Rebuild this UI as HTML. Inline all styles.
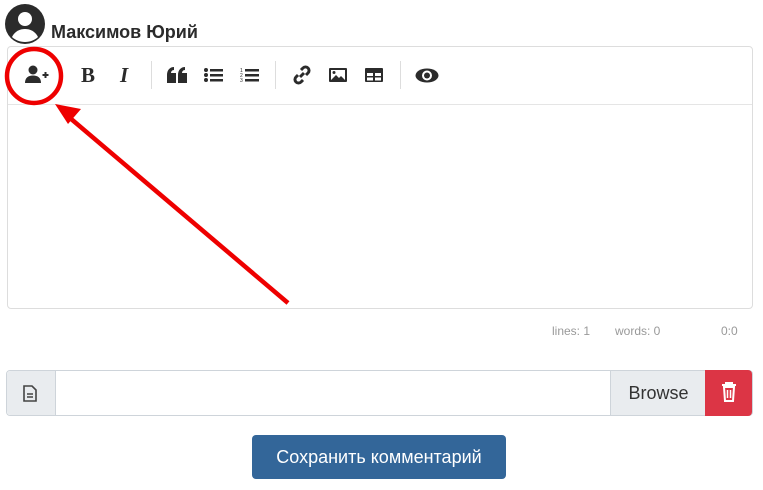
<!DOCTYPE html>
<html><head><meta charset="utf-8"><style>
body{margin:0;width:763px;height:490px;background:#fff;font-family:"Liberation Sans",sans-serif;position:relative;overflow:hidden}
.abs{position:absolute}
.ic{position:absolute;top:66px;color:#2b2b2b}
.sep{position:absolute;top:61px;width:1px;height:28px;background:#ddd}
</style></head><body>
<svg class="abs" style="left:5px;top:4px" width="40" height="40" viewBox="0 0 40 40"><circle cx="20" cy="20" r="20" fill="#2b2b2b"/><circle cx="20" cy="15" r="7" fill="#fff"/><path d="M7 33c3-6 8-8 13-8s10 2 13 8c-3 3-8 5-13 5s-10-2-13-5z" fill="#fff"/></svg>
<div class="abs" style="left:51px;top:22px;font-size:18px;font-weight:bold;color:#2b2b2b">Максимов Юрий</div>
<div class="abs" style="left:7px;top:46px;width:744px;height:261px;border:1px solid #ddd;border-radius:4px"></div>
<div class="abs" style="left:8px;top:104px;width:744px;height:1px;background:#e5e5e5"></div>
<svg class="ic" style="left:24px;top:65px" width="26" height="20" viewBox="0 0 26 20"><circle cx="9" cy="5" r="4.5" fill="#2b2b2b"/><path d="M1 18c0-5 3-7.5 8-7.5s8 2.5 8 7.5z" fill="#2b2b2b"/><path d="M18.5 10h6M21.5 7v6" stroke="#2b2b2b" stroke-width="2"/></svg>
<div class="ic" style="left:81px;top:63px;font:bold 21px 'Liberation Serif',serif">B</div>
<div class="ic" style="left:120px;top:63px;font:italic bold 21px 'Liberation Serif',serif">I</div>
<div class="sep" style="left:151px"></div>
<svg class="ic" style="left:167px;top:67px" width="21" height="16" viewBox="0 0 21 16"><path d="M0 8c0-5 3-8 7-8v3c-2 0-3 1.5-3 3h5v10H0zM11 8c0-5 3-8 7-8v3c-2 0-3 1.5-3 3h5v10h-9z" fill="#2b2b2b"/></svg>
<svg class="ic" style="left:204px;top:68px" width="20" height="14"><g fill="#2b2b2b"><circle cx="2" cy="2" r="2"/><circle cx="2" cy="7" r="2"/><circle cx="2" cy="12" r="2"/><rect x="6" y="1" width="13" height="2.5"/><rect x="6" y="6" width="13" height="2.5"/><rect x="6" y="11" width="13" height="2.5"/></g></svg>
<svg class="ic" style="left:240px;top:67px" width="20" height="16"><g fill="#2b2b2b"><text x="0" y="5" font-size="5">1</text><text x="0" y="10" font-size="5">2</text><text x="0" y="15" font-size="5">3</text><rect x="5" y="2" width="14" height="2.5"/><rect x="5" y="7" width="14" height="2.5"/><rect x="5" y="12" width="14" height="2.5"/></g></svg>
<div class="sep" style="left:275px"></div>
<svg class="ic" style="left:292px;top:65px" width="20" height="20" viewBox="0 0 20 20"><path d="M8 12l4-4M9 5l2-2a3.5 3.5 0 015 5l-2 2M11 15l-2 2a3.5 3.5 0 01-5-5l2-2" stroke="#2b2b2b" stroke-width="3" fill="none"/></svg>
<svg class="ic" style="left:328px;top:67px" width="20" height="16"><rect x="1" y="1" width="18" height="14" rx="1" fill="#2b2b2b"/><rect x="3" y="3" width="14" height="10" fill="#fff"/><path d="M3 13l5-5 3 3 2-2 4 4z" fill="#2b2b2b"/><circle cx="6" cy="5.5" r="1.5" fill="#2b2b2b"/></svg>
<svg class="ic" style="left:364px;top:67px" width="20" height="16"><rect x="1" y="1" width="18" height="14" rx="1" fill="#2b2b2b"/><rect x="3" y="6" width="6" height="3" fill="#fff"/><rect x="11" y="6" width="6" height="3" fill="#fff"/><rect x="3" y="10.5" width="6" height="3" fill="#fff"/><rect x="11" y="10.5" width="6" height="3" fill="#fff"/></svg>
<div class="sep" style="left:400px"></div>
<svg class="ic" style="left:415px;top:68px" width="24" height="15"><ellipse cx="12" cy="7.5" rx="11.5" ry="7" fill="#2b2b2b"/><circle cx="12" cy="7.5" r="5" fill="#fff"/><circle cx="12" cy="7.5" r="3" fill="#2b2b2b"/></svg>
<svg class="abs" style="left:0;top:0" width="763" height="320"><circle cx="34" cy="76" r="27" fill="none" stroke="#ee0000" stroke-width="4.5"/><line x1="288" y1="303" x2="70" y2="118" stroke="#ee0000" stroke-width="4.5"/><path d="M55 104l26 5-13 15z" fill="#ee0000"/></svg>
<div class="abs" style="left:552px;top:324px;font-size:12px;color:#999">lines: 1</div>
<div class="abs" style="left:615px;top:324px;font-size:12px;color:#999">words: 0</div>
<div class="abs" style="left:721px;top:324px;font-size:12px;color:#999">0:0</div>
<div class="abs" style="left:6px;top:370px;width:745px;height:44px;border:1px solid #ced4da;border-radius:4px"></div>
<div class="abs" style="left:7px;top:371px;width:48px;height:44px;background:#e9ecef;border-right:1px solid #ced4da;border-radius:4px 0 0 4px"></div>
<svg class="abs" style="left:23px;top:385px" width="14" height="17"><path d="M1 1h8l4 4v11H1z" fill="none" stroke="#444" stroke-width="1.6"/><path d="M4 9h6M4 12h6" stroke="#444" stroke-width="1.6"/></svg>
<div class="abs" style="left:610px;top:371px;width:95px;height:44px;background:#e9ecef;border-left:1px solid #ced4da;font-size:18px;color:#333;line-height:44px;text-align:center">Browse</div>
<div class="abs" style="left:705px;top:370px;width:47px;height:46px;background:#dc3545;border-radius:0 4px 4px 0"></div>
<svg class="abs" style="left:721px;top:382px" width="16" height="20"><path d="M1 3h14M5 3V1h6v2" stroke="#fff" stroke-width="2" fill="none"/><path d="M3 5h10l-1 14H4z" fill="none" stroke="#fff" stroke-width="2"/><path d="M6.5 8v8M9.5 8v8" stroke="#fff" stroke-width="1.5"/></svg>
<div class="abs" style="left:252px;top:435px;width:254px;height:44px;background:#336699;border-radius:4px;color:#fff;font-size:18px;line-height:44px;text-align:center">Сохранить комментарий</div>
</body></html>
